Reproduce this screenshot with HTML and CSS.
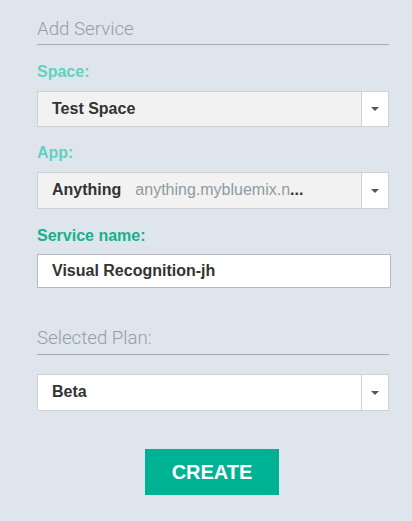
FILE: index.html
```html
<!DOCTYPE html>
<html>
<head>
<meta charset="utf-8">
<link rel="stylesheet" href="styles.css">
</head>
<body>
<div class="panel">
  <div class="heading heading-top">Add Service</div>

  <div class="label label-light label-first">Space:</div>
  <div class="select select-grey">
    <div class="select-value">Test Space</div>
    <div class="select-arrow"><span class="tri"></span></div>
  </div>

  <div class="label label-light">App:</div>
  <div class="select select-grey select-app">
    <div class="select-value"><span class="app-name">Anything</span><span class="app-url">anything.mybluemix.n</span><span class="dots">...</span></div>
    <div class="select-arrow"><span class="tri"></span></div>
  </div>

  <div class="label label-dark">Service name:</div>
  <div class="input">Visual Recognition-jh</div>

  <div class="heading heading-plan">Selected Plan:</div>
  <div class="select select-white select-plan">
    <div class="select-value">Beta</div>
    <div class="select-arrow"><span class="tri"></span></div>
  </div>

  <div class="actions">
    <button class="create">CREATE</button>
  </div>
</div>
</body>
</html>
```

FILE: styles.css
```css
html, body {
  margin: 0;
  padding: 0;
  background: #dfe5ec;
}
body {
  font-family: "Liberation Sans", Arial, sans-serif;
  width: 412px;
  height: 521px;
  overflow: hidden;
}
.panel {
  margin-left: 37px;
  width: 352px;
  display: flex;
  flex-direction: column;
}
.heading {
  font-family: Roboto, "Liberation Sans", sans-serif;
  font-weight: 300;
  font-size: 18.7px;
  line-height: 22px;
  color: #939fa7;
  border-bottom: 1px solid #a2acb2;
  padding-bottom: 4px;
}
.heading-top { margin-top: 18px; }
.heading-plan { margin-top: 39px; padding-bottom: 5px; }

.label {
  font-weight: bold;
  font-size: 16px;
  line-height: 18px;
  margin-top: 17px;
  margin-bottom: 10px;
}
.label-first { margin-top: 18px; }
.label-light { color: #5fd2c0; }
.label-dark { color: #16b08f; margin-top: 18px; margin-bottom: 9px; }

.select {
  height: 36px;
  box-sizing: border-box;
  border: 1px solid #cfd0d1;
  display: flex;
}
.select-app { height: 37px; }
.select-grey { background: #f2f2f2; }
.select-white { background: #ffffff; height: 37px; margin-top: 19px; }
.select-value {
  flex: 1;
  padding-left: 14px;
  font-weight: bold;
  font-size: 16px;
  line-height: 34px;
  color: #333333;
  white-space: nowrap;
  overflow: hidden;
}
.app-url {
  font-weight: normal;
  color: #8d9ba3;
  margin-left: 14px;
}
.dots { color: #333; }
.select-arrow {
  width: 26px;
  background: #ffffff;
  border-left: 1px solid #cfd0d1;
  display: flex;
  align-items: center;
  justify-content: center;
}
.tri {
  width: 0;
  height: 0;
  border-left: 4px solid transparent;
  border-right: 4px solid transparent;
  border-top: 4px solid #555555;
}

.input {
  width: 354px;
  height: 34px;
  box-sizing: border-box;
  border: 1px solid #b8b9ba;
  background: #ffffff;
  padding-left: 14px;
  font-weight: bold;
  font-size: 16px;
  line-height: 32px;
  color: #333333;
}

.actions {
  display: flex;
  justify-content: center;
  margin-top: 38px;
}
.create {
  width: 134px;
  height: 46px;
  border: none;
  background: #00b294;
  color: #ffffff;
  font-family: "Liberation Sans", Arial, sans-serif;
  font-weight: bold;
  font-size: 20px;
  padding: 0;
  margin-right: 2px;
}
```
